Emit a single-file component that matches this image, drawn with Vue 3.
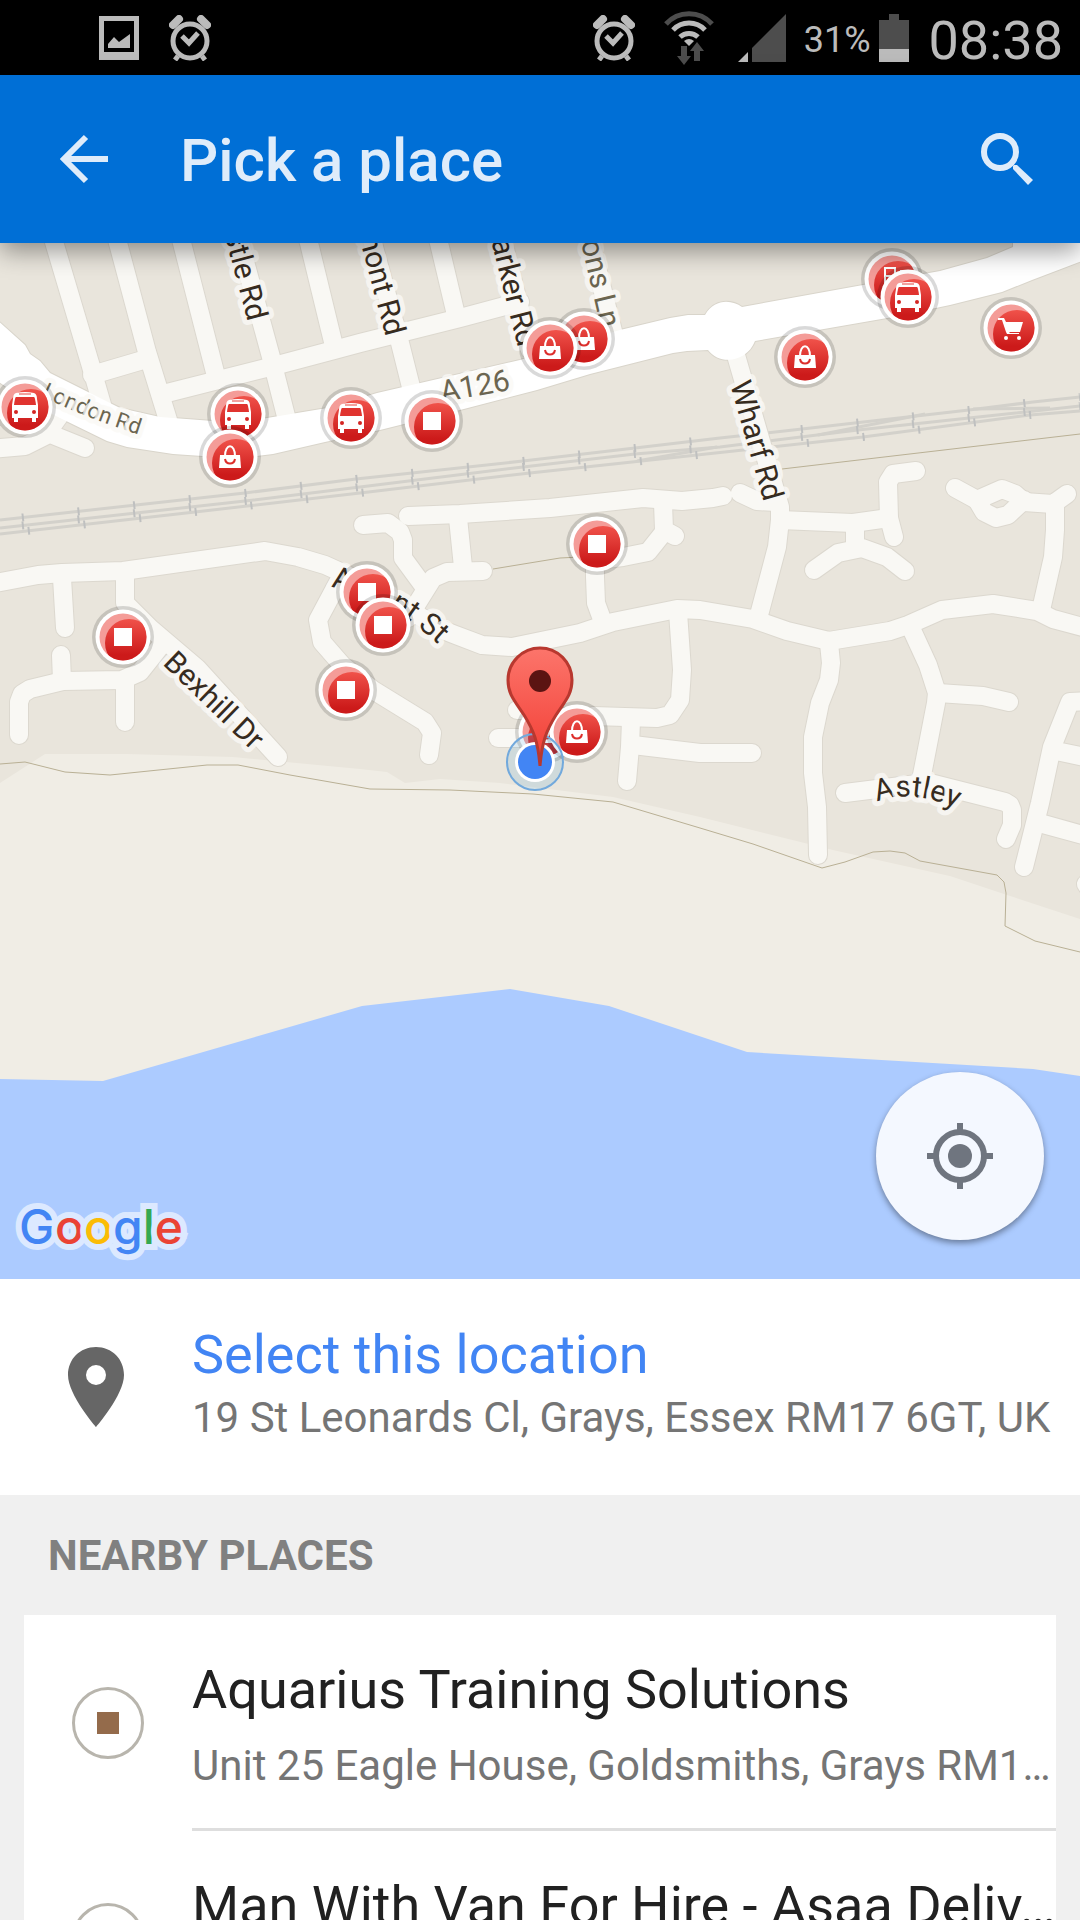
<script setup>
const minorRoads = [
  'M49 225L90 363L103 408', 'M113 225L118 243L147 352L168 420', 'M177 225L182 243L217 380',
  'M235 225L271 357L287 420', 'M304 225L309 243L334 346', 'M92 375L143 360',
  'M163 394L270 367L334 350L360 343L460 318L520 302', 'M368 225L400 343L413 395',
  'M434 225L439 243L456 315', 'M499 225L530 350', 'M586 225L614 335',
  'M-10 449L25 446L45 436L60 415', 'M48 433L85 448',
  'M-10 584L38 575L62 573L123 571L265 551L298 557L325 565L347 575L392 600L443 630L453 634L482 645L512 647L580 633L613 622L677 609L700 610L753 619L787 631L829 641L890 631L908 625L942 610L993 604L1037 611L1053 619L1090 629',
  'M342 575L318 620L322 642L342 665L373 690L425 722L432 733L429 755',
  'M62 578L65 628', 'M61 655L62 681', 'M19 735V702L22 694L30 689L63 681L122 680L140 672L163 643',
  'M125 577V603L150 628L197 668L278 757', 'M125 680V722',
  'M363 525L388 523L400 532L403 540V558L425 588', 'M483 571L447 572L433 578L408 618',
  'M408 516L460 514L550 508L643 498L682 501L713 498L723 496', 'M458 518L463 567',
  'M663 503L664 530L675 536', 'M664 532L648 552L623 557L597 560', 'M595 550L595 577L596 603L603 622',
  'M678 612L682 670L680 700L670 715L657 718L593 716', 'M517 710H545', 'M498 738H545',
  'M631 720L630 747L627 781', 'M633 745L700 753H752',
  'M733 345L780 507V520L777 547L759 615', 'M740 493L757 501L776 502',
  'M780 520L853 523L889 518', 'M916 471L893 474L888 482L889 518L894 537', 'M855 523V547',
  'M814 570L838 553L862 548L887 557L905 571',
  'M955 488L977 500L1002 489L1015 494L1024 502L1053 504L1067 494', 'M977 500L984 512L996 518L1008 515L1024 500',
  'M1055 503V530L1053 557L1041 610',
  'M829 643L831 663L829 680L820 703L813 737V773L817 807L818 855',
  'M911 628L928 665L937 693L936 703L922 775', 'M938 693L983 696L1009 702',
  'M845 793L917 784L930 783L1005 802L1010 805L1012 810V825L1006 839',
  'M1090 701L1070 702L1052 747L1040 803L1024 867', 'M1056 751L1090 758', 'M1043 824L1090 837', 'M1086 884L1090 890',
]
const mainRoad =
  'M-4 319L25 345L30 354L40 361L50 373L120 408L160 417L213 421L255 420L297 413L327 408L377 393L520 360L620 330L670 318L688 315L705 315C715 298 732 300 742 307L863 285L940 271L987 258L1013 247V230H1090V258L1032 280L1002 292L950 305L893 317L755 341C747 362 720 366 708 350L687 351L673 353L590 374L537 390L460 410L380 430L325 442L273 454L257 456L217 457L173 454L127 447L107 441L60 418L25 400L-4 380Z'
const rails = [
  { d: 'M0 520L245 493L356 479L523 461L635 448L720 438L802 429L969 410L1033 402L1080 397', start: -22 },
  { d: 'M0 528L245 501L360 487L523 467L635 454L720 447L858 430L969 418L1080 406', start: -22 },
  { d: 'M0 534L195 512L360 493L530 473L697 455L863 437L1030 415L1080 411', start: -28 },
]
const crossovers = ['M637 461L717 447', 'M818 435L925 414', 'M973 409L1050 408']
const paths = [
  'M0 764L25 762L65 772L110 775L207 765L238 765L290 775L370 789L450 790L533 794L613 802L700 828L753 844L822 868L845 862L873 852L890 851L905 853L920 861L997 875L1004 882L1006 893L1005 926L1035 941L1080 952',
  'M493 569L560 558L580 557',
  'M782 469L1080 434',
]
const pins = [
  { x: 25, y: 407, kind: 'bus' }, { x: 238, y: 414, kind: 'bus' }, { x: 230, y: 457, kind: 'bag' },
  { x: 351, y: 418, kind: 'bus' }, { x: 432, y: 421, kind: 'square' }, { x: 584, y: 339, kind: 'bag' },
  { x: 550, y: 348, kind: 'bag' }, { x: 597, y: 544, kind: 'square' }, { x: 892, y: 279, kind: 'fuel' },
  { x: 908, y: 297, kind: 'bus' }, { x: 1011, y: 328, kind: 'cart' }, { x: 805, y: 357, kind: 'bag' },
  { x: 123, y: 637, kind: 'square' }, { x: 367, y: 592, kind: 'square' }, { x: 383, y: 625, kind: 'square' },
  { x: 346, y: 690, kind: 'square' }, { x: 546, y: 732, kind: 'bag' }, { x: 577, y: 732, kind: 'bag' },
]
const straightLabels = [
  { text: 'Castle Rd', x: 248, y: 322, angle: 75, anchor: 'end' },
  { text: 'Belmont Rd', x: 386, y: 337, angle: 75, anchor: 'end' },
  { text: 'Parker Rd', x: 518, y: 348, angle: 76, anchor: 'end' },
  { text: 'Parsons Ln', x: 601, y: 329, angle: 77, anchor: 'end', muted: true },
  { text: 'Wharf Rd', x: 730, y: 384, angle: 74, anchor: 'start' },
  { text: 'Bexhill Dr', x: 162, y: 664, angle: 44, anchor: 'start' },
  { text: 'A126', x: 442, y: 402, angle: -10, anchor: 'start', muted: true },
]
const places = [
  { name: 'Aquarius Training Solutions', address: 'Unit 25 Eagle House, Goldsmiths, Grays RM17 6SN' },
  { name: 'Man With Van For Hire - Asaa Deliv…', address: 'Grays, Essex RM17 6GT' },
]
</script>

<template>
  <div class="screen">
    <div class="status">
      <div class="notifications">
        <svg width="40" height="44" viewBox="0 0 40 44">
          <path fill="#bbb" fill-rule="evenodd" d="M0 0H40V44H0ZM5 5V36H35V5Z" />
          <path fill="#bbb" d="M9 28L15 21L20 26L31 18V32H9Z" />
        </svg>
        <svg class="alarm" width="42" height="46" viewBox="0 0 42 46">
          <circle cx="21" cy="26" r="17" />
          <path class="bell" d="M4 10L10 4M38 10L32 4" />
          <path d="M9 41L6 45M33 41L36 45M13 21L20 28L29 18" />
        </svg>
      </div>
      <svg class="alarm" width="42" height="46" viewBox="0 0 42 46">
        <circle cx="21" cy="26" r="17" />
        <path class="bell" d="M4 10L10 4M38 10L32 4" />
        <path d="M9 41L6 45M33 41L36 45M13 21L20 28L29 18" />
      </svg>
      <svg class="wifi" width="50" height="54" viewBox="0 0 50 54">
        <g fill="none" stroke-width="5">
          <path stroke="#4d4d4d" d="M2 13A31 31 0 0 1 48 13" />
          <path stroke="#bbb" d="M9 19A22 22 0 0 1 41 19M16 26A13 13 0 0 1 34 26" />
        </g>
        <path fill="#bbb" d="M20 30Q25 26 30 30L25 35Z" />
        <path fill="#4d4d4d" d="M17 35H23V45H27L20 54L13 45H17ZM30 50V40H26L33 31L40 40H36V50Z" />
      </svg>
      <svg class="signal" width="48" height="48" viewBox="0 0 48 48">
        <path fill="#bbb" d="M0 48L10 38V48Z" />
        <path fill="#4d4d4d" d="M14 48V34L48 0V48Z" />
      </svg>
      <span class="percent">31%</span>
      <svg class="battery" width="30" height="48" viewBox="0 0 30 48">
        <path fill="#4d4d4d" d="M0 6H10V0H20V6H30V35H0Z" />
        <path fill="#bbb" d="M0 35H30V48H0Z" />
      </svg>
      <time class="clock">08:38</time>
    </div>

    <header class="appbar">
      <button class="icon-button" type="button" aria-label="Back">
        <svg width="48" height="50" viewBox="0 0 48 50">
          <path fill="none" stroke="#dfecfa" stroke-width="6" d="M26 3L4 25L26 47M4 25H48" />
        </svg>
      </button>
      <h1>Pick a place</h1>
      <button class="icon-button" type="button" aria-label="Search">
        <svg width="54" height="54" viewBox="0 0 54 54">
          <circle cx="20" cy="20" r="16" fill="none" stroke="#dfecfa" stroke-width="6" />
          <path fill="#dfecfa" d="M33 34V37L48 53L53 48L37 33H34Z" />
        </svg>
      </button>
    </header>

    <main class="content">
      <section class="map" aria-label="Map">
        <svg class="canvas" viewBox="0 243 1080 1036">
          <defs>
            <linearGradient id="pinRed" x1="0" y1="0" x2="0" y2="1">
              <stop offset="0" stop-color="#f0524a" />
              <stop offset="0.75" stop-color="#cc1a1a" />
            </linearGradient>
            <linearGradient id="markerRed" x1="0" y1="0" x2="0" y2="1">
              <stop offset="0" stop-color="#fc756b" />
              <stop offset="1" stop-color="#f23c33" />
            </linearGradient>
            <clipPath id="disc"><circle r="23.5" /></clipPath>
            <path id="londonLine" d="M41 396Q90 420 150 438" />
            <path id="argentLine" d="M331 587C365 592 400 606 455 660" />
            <path id="astleyLine" d="M877 802Q916 786 972 816" />
            <g id="pin-square"><path fill="#fff" d="M-9 -9H9V9H-9Z" /></g>
            <g id="pin-bag">
              <path fill="#fff" d="M-10 -2H10L11 11H-11Z" />
              <path fill="none" stroke="#fff" stroke-width="2" d="M-5 -1C-5 -14 5 -14 5 -1" />
              <path fill="none" stroke="#dc2e2b" stroke-width="2" d="M-5 2C-4 8 4 8 5 2" />
            </g>
            <g id="pin-bus">
              <path fill="#fff" d="M-9 -14Q0 -16 9 -14Q12 -13 12 -8L13 -2V11H11V15H7V11H-7V15H-11V11H-13V-2L-12 -8Q-12 -13 -9 -14Z" />
              <path fill="#e0332f" d="M-9 -10H9Q10 -10 11 -2H-11Q-10 -10 -9 -10Z" />
              <path stroke="#e5453f" d="M-6 -13H6" />
              <circle cx="-9" cy="5" r="2" fill="#d42522" /><circle cx="9" cy="5" r="2" fill="#d42522" />
            </g>
            <g id="pin-fuel">
              <path fill="none" stroke="#fff" stroke-width="2" d="M-7 12V-11H3V12M-7 -3H3M8 -8H12" />
            </g>
            <g id="pin-cart">
              <path fill="#fff" d="M-13 -10H-7L-5 -6H12L9 4H-2L-1 5H8V6H-4L-5 4L-9 -8H-13Z" />
              <circle cx="-5" cy="10" r="2" fill="#fff" /><circle cx="8" cy="10" r="2" fill="#fff" />
            </g>
          </defs>

          <path fill="#e9e5dc" d="M0 243H1080V1279H0Z" />
          <path fill="#f0ede5" d="M0 783L45 754L127 754L233 757L360 769L387 772L405 783L440 779L500 783L613 797L700 817L833 850L950 876L1007 895L1080 919V1279H0Z" />
          <path fill="#accbff" d="M0 1079L103 1081L362 1006L510 989L609 1006L747 1052L1033 1069L1080 1076V1279H0Z" />

          <g fill="none" stroke="#d3d1cb" stroke-width="3">
            <path v-for="r in rails" :key="r.d" :d="r.d" />
            <path v-for="c in crossovers" :key="c" :d="c" />
          </g>
          <g fill="none" stroke="#bfc0c0" stroke-width="8">
            <path v-for="r in rails" :key="r.d" :d="r.d" stroke-dasharray="2 54" :stroke-dashoffset="r.start" />
          </g>

          <g class="roads casing"><path v-for="d in minorRoads" :key="d" :d="d" /></g>
          <path :d="mainRoad" fill="#fff" stroke="#d9d5cb" stroke-width="2" />
          <g class="roads surface"><path v-for="d in minorRoads" :key="d" :d="d" /></g>
          <path :d="mainRoad" fill="#fff" />

          <path v-for="p in paths" :key="p" :d="p" fill="none" stroke="#b9b095" />

          <g class="labels">
            <text
              v-for="l in straightLabels" :key="l.text" :class="{ muted: l.muted }"
              :text-anchor="l.anchor" :transform="`translate(${l.x} ${l.y}) rotate(${l.angle})`"
            >{{ l.text }}</text>
            <text class="muted small"><textPath href="#londonLine">London Rd</textPath></text>
            <text><textPath href="#argentLine">Argent St</textPath></text>
            <text><textPath href="#astleyLine">Astley</textPath></text>
          </g>

          <g v-for="(p, i) in pins" :key="i" :transform="`translate(${p.x} ${p.y})`">
            <circle r="31" fill="#000" fill-opacity="0.15" />
            <circle r="27.5" fill="#fff" />
            <circle r="23.5" fill="#f49c98" />
            <g clip-path="url(#disc)"><circle cx="6" cy="6" r="24" fill="url(#pinRed)" /></g>
            <use :href="`#pin-${p.kind}`" />
          </g>

          <circle cx="535" cy="762" r="28" fill="#4a9fd8" fill-opacity="0.16" stroke="#72a9dc" stroke-width="2" />
          <circle cx="535" cy="762" r="20" fill="#fff" />
          <circle cx="535" cy="762" r="17" fill="#4285f4" />
          <path fill="url(#markerRed)" stroke="#b8382f" stroke-width="3" d="M540 766C538 742 534 731 524 715C514 700 508 694 508 680A32 32 0 0 1 572 680C572 694 566 700 556 715C546 731 542 742 540 766Z" />
          <circle cx="540" cy="681" r="11" fill="#5b1412" />

          <text class="logo" x="19" y="1244" aria-label="Google"><tspan fill="#4285f4">G</tspan><tspan fill="#ea4335">o</tspan><tspan fill="#fbbc05">o</tspan><tspan fill="#4285f4">g</tspan><tspan fill="#34a853">l</tspan><tspan fill="#ea4335">e</tspan></text>
        </svg>
        <button class="locate" type="button" aria-label="My location">
          <svg width="66" height="66" viewBox="0 0 66 66">
            <circle cx="33" cy="33" r="24" fill="none" stroke="#6f757f" stroke-width="6" />
            <circle cx="33" cy="33" r="12" fill="#6f757f" />
            <path stroke="#6f757f" stroke-width="6" d="M33 0V8M33 58V66M0 33H8M58 33H66" />
          </svg>
        </button>
      </section>

      <button class="select" type="button">
        <span class="lead">
          <svg width="58" height="80" viewBox="0 0 58 80">
            <path fill="#666" fill-rule="evenodd" d="M29 0C13 0 1 12 1 28C1 48 29 80 29 80C29 80 57 48 57 28C57 12 45 0 29 0ZM29 18A10 10 0 1 1 29 38A10 10 0 1 1 29 18Z" />
          </svg>
        </span>
        <span class="copy">
          <span class="title accent">Select this location</span>
          <span class="detail">19 St Leonards Cl, Grays, Essex RM17 6GT, UK</span>
        </span>
      </button>

      <section class="nearby">
        <h2>NEARBY PLACES</h2>
        <ul>
          <li v-for="place in places" :key="place.name">
            <button class="place" type="button">
              <span class="badge"><span class="dot"></span></span>
              <span class="copy">
                <span class="title">{{ place.name }}</span>
                <span class="detail">{{ place.address }}</span>
              </span>
            </button>
          </li>
        </ul>
      </section>
    </main>
  </div>
</template>

<style>
body {
  margin: 0;
  background: #f0f0f0;
}
</style>

<style scoped>
.screen {
  display: flex;
  flex-direction: column;
  height: 100vh;
  overflow: hidden;
  font-family: Roboto, "Noto Sans", sans-serif;
}
button {
  margin: 0;
  padding: 0;
  border: 0;
  background: none;
  font: inherit;
  color: inherit;
  text-align: left;
}
svg {
  display: block;
  flex: none;
}
.status {
  display: flex;
  flex: none;
  align-items: center;
  height: 75px;
  padding: 0 17px 0 99px;
  background: #000;
  color: #bbb;
}
.notifications {
  display: flex;
  align-items: center;
  gap: 30px;
  margin-right: auto;
}
.alarm {
  fill: none;
  stroke: #bbb;
  stroke-width: 5;
}
.alarm .bell {
  stroke-width: 8;
  stroke-linecap: round;
}
.wifi {
  margin: 0 24px 0 29px;
}
.percent {
  margin: 4px 8px 0 18px;
  font-size: 36px;
  line-height: 42px;
}
.clock {
  margin: 6px 0 0 20px;
  font-size: 54px;
  line-height: 64px;
}
.appbar {
  position: relative;
  z-index: 1;
  display: flex;
  flex: none;
  align-items: center;
  height: 168px;
  padding: 0 46px 0 60px;
  background: #006fd6;
  color: #dfecfa;
  box-shadow: 0 8px 24px rgba(0, 0, 0, 0.4);
}
.appbar h1 {
  flex: 1;
  margin: 4px 0 0 72px;
  font-size: 60px;
  font-weight: 500;
  line-height: 72px;
}
.content {
  flex: 1;
  min-height: 0;
}
.map {
  position: relative;
}
.canvas {
  width: 100%;
  height: auto;
}
.roads {
  fill: none;
  stroke-linecap: round;
  stroke-linejoin: round;
}
.casing {
  stroke: #dcd8cf;
  stroke-width: 20;
}
.surface {
  stroke: #f9f8f4;
  stroke-width: 18;
}
.labels text {
  fill: #362b20;
  font-size: 30px;
  stroke: rgba(250, 249, 246, 0.8);
  stroke-width: 10px;
  stroke-linejoin: round;
  paint-order: stroke;
}
.labels .muted {
  fill: #6b6550;
}
.labels .small {
  font-size: 22px;
}
.logo {
  font-family: Inter, sans-serif;
  font-size: 48px;
  font-weight: 500;
  stroke: #dce9ff;
  stroke-width: 12px;
  paint-order: stroke;
}
.locate {
  position: absolute;
  right: 36px;
  bottom: 39px;
  display: flex;
  align-items: center;
  justify-content: center;
  width: 168px;
  height: 168px;
  border-radius: 50%;
  background: #f4f8ff;
  box-shadow: 0 3px 6px rgba(0, 0, 0, 0.4);
}
.select,
.place {
  display: flex;
  align-items: center;
  width: 100%;
  height: 216px;
  background: #fff;
}
.lead {
  display: flex;
  justify-content: center;
  flex: none;
  width: 192px;
}
.copy {
  display: flex;
  flex: 1;
  flex-direction: column;
  min-width: 0;
}
.select .copy {
  gap: 6px;
  padding-bottom: 8px;
}
.title,
.detail {
  overflow: hidden;
  white-space: nowrap;
  text-overflow: ellipsis;
}
.title {
  overflow: visible;
  font-size: 54px;
  line-height: 64px;
  color: #212121;
}
.accent {
  color: #4285f4;
}
.detail {
  font-size: 42px;
  line-height: 50px;
  color: #757575;
}
.nearby {
  padding: 0 24px;
  background: #f0f0f0;
}
.nearby h2 {
  margin: 0;
  padding: 2px 24px 0;
  font-size: 42px;
  font-weight: 700;
  line-height: 118px;
  color: #808080;
}
.nearby ul {
  margin: 0;
  padding: 0;
  list-style: none;
}
.badge {
  display: flex;
  align-items: center;
  justify-content: center;
  flex: none;
  box-sizing: border-box;
  width: 72px;
  height: 72px;
  margin: 0 48px;
  border: 3px solid #b8b5ad;
  border-radius: 50%;
}
.dot {
  width: 22px;
  height: 22px;
  background: #946b4b;
}
.place .copy {
  box-sizing: border-box;
  gap: 19px;
  height: 216px;
  padding-top: 43px;
  border-bottom: 3px solid #dedede;
}
</style>
